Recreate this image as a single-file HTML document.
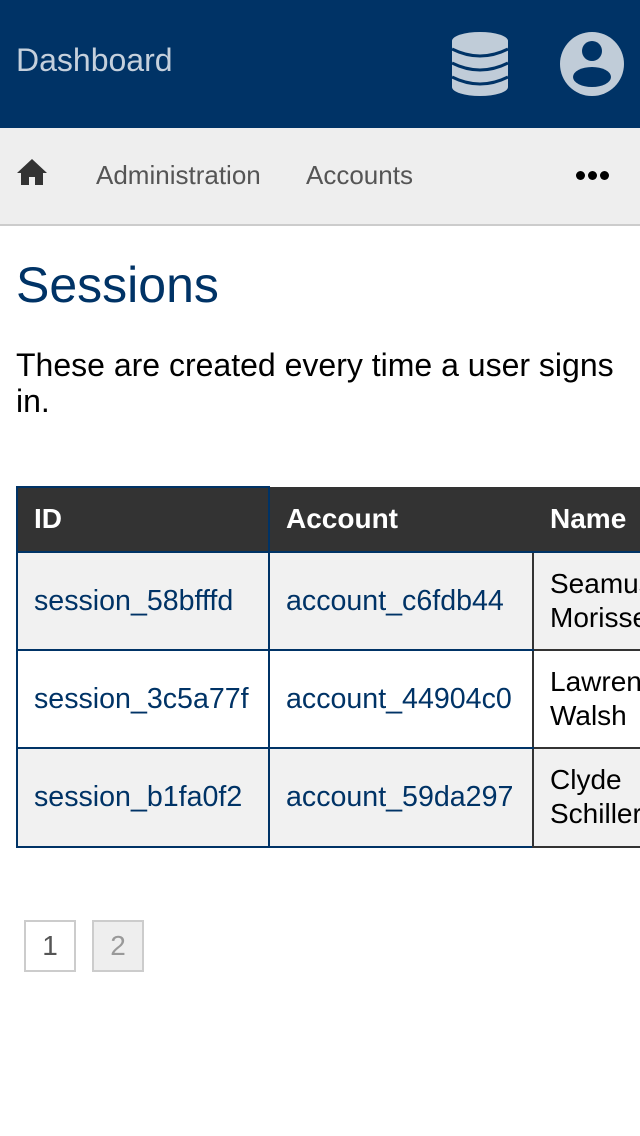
<!DOCTYPE html><html><head><style>
*{margin:0;padding:0;box-sizing:border-box}
html,body{width:640px;height:1136px;overflow:hidden}
body{font-family:"Liberation Sans",sans-serif;background:#fff}
#w{position:relative;width:640px;height:1136px;overflow:hidden}
.a{position:absolute}
.top{left:0;top:0;width:640px;height:128px;background:#003366}
.nav{left:0;top:128px;width:640px;height:98px;background:#eeeeee;border-bottom:2px solid #ccc}
.c{position:absolute;font-size:28px;line-height:34px}
.l{color:#003366;font-size:28.6px}
.n{max-width:90px;overflow:hidden;white-space:nowrap}
</style></head><body><div id="w">
<div class="a top"></div>
<div class="a" style="left:16px;top:42px;font-size:32px;color:#c5d0dc">Dashboard</div>
<svg class="a" style="left:450px;top:31px" width="60" height="66" viewBox="0 0 60 66"><g fill="#c0ccd8"><ellipse cx="30" cy="10" rx="28" ry="9"/><rect x="2" y="10" width="56" height="46"/><ellipse cx="30" cy="56" rx="28" ry="9"/></g><g fill="none" stroke="#003366" stroke-width="3"><path d="M2 18q28 14 56 0M2 32q28 14 56 0M2 46q28 14 56 0"/></g></svg>
<svg class="a" style="left:560px;top:32px" width="64" height="64" viewBox="0 0 64 64"><circle cx="32" cy="32" r="32" fill="#c0ccd8"/><circle cx="32" cy="19" r="10" fill="#003366"/><ellipse cx="32" cy="45" rx="19" ry="10" fill="#003366"/></svg>
<div class="a nav"></div>
<svg class="a" style="left:16px;top:158px" width="32" height="28" viewBox="0 0 32 28"><path d="M16 1L1 15h4v12h8v-8h6v8h8V15h4z" fill="#333"/></svg>
<div class="a" style="left:96px;top:160px;font-size:26px;color:#555">Administration</div>
<div class="a" style="left:306px;top:160px;font-size:26px;color:#555">Accounts</div>
<div class="a" style="left:576px;top:171px;width:36px;height:10px"><span class="a" style="left:0;top:0;width:9px;height:9px;border-radius:50%;background:#000"></span><span class="a" style="left:12px;top:0;width:9px;height:9px;border-radius:50%;background:#000"></span><span class="a" style="left:24px;top:0;width:9px;height:9px;border-radius:50%;background:#000"></span></div>
<div class="a" style="left:16px;top:256px;font-size:50px;color:#003366">Sessions</div>
<div class="a" style="left:16px;top:347px;width:620px;font-size:32px;line-height:36px;color:#000">These are created every time a user signs in.</div>
<div class="a" style="left:17px;top:487px;width:623px;height:66px;background:#333"></div>
<div class="a" style="left:17px;top:553px;width:623px;height:98px;background:#f1f1f1"></div>
<div class="a" style="left:17px;top:749px;width:623px;height:98px;background:#f1f1f1"></div>
<div class="a" style="left:16px;top:486px;width:254px;height:362px;border:2px solid #003366"></div>
<div class="a" style="left:268px;top:486px;width:2px;height:362px;background:#003366"></div>
<div class="a" style="left:268px;top:846px;width:266px;height:2px;background:#003366"></div>
<div class="a" style="left:532px;top:553px;width:2px;height:295px;background:#333"></div>
<div class="a" style="left:16px;top:551px;width:624px;height:2px;background:#003366"></div>
<div class="a" style="left:16px;top:649px;width:624px;height:2px;background:#003366"></div>
<div class="a" style="left:16px;top:747px;width:624px;height:2px;background:#003366"></div>
<div class="a" style="left:534px;top:649px;width:106px;height:2px;background:#333"></div>
<div class="a" style="left:534px;top:747px;width:106px;height:2px;background:#333"></div>
<div class="a" style="left:534px;top:846px;width:106px;height:2px;background:#333"></div>
<div class="c" style="left:34px;top:502px;color:#fff;font-weight:bold">ID</div>
<div class="c" style="left:286px;top:502px;color:#fff;font-weight:bold">Account</div>
<div class="c n" style="left:550px;top:502px;color:#fff;font-weight:bold">Name</div>
<div class="c l" style="left:34px;top:584px">session_58bfffd</div>
<div class="c l" style="left:286px;top:584px">account_c6fdb44</div>
<div class="c n" style="left:550px;top:567px">Seamus<br>Morissette</div>
<div class="c l" style="left:34px;top:682px">session_3c5a77f</div>
<div class="c l" style="left:286px;top:682px">account_44904c0</div>
<div class="c n" style="left:550px;top:665px">Lawrence<br>Walsh</div>
<div class="c l" style="left:34px;top:780px">session_b1fa0f2</div>
<div class="c l" style="left:286px;top:780px">account_59da297</div>
<div class="c n" style="left:550px;top:763px">Clyde<br>Schiller</div>
<div class="a" style="left:24px;top:920px;width:52px;height:52px;border:2px solid #ccc;font-size:28px;line-height:48px;text-align:center;color:#555">1</div>
<div class="a" style="left:92px;top:920px;width:52px;height:52px;border:2px solid #ccc;background:#eee;font-size:28px;line-height:48px;text-align:center;color:#999">2</div>
</div></body></html>
